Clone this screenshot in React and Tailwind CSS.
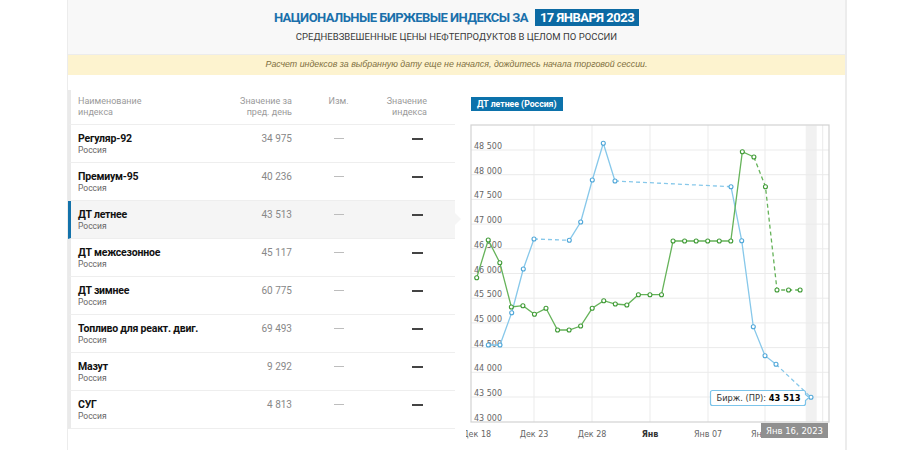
import React from "react";

const rows = [
  { name: "Регуляр-92", prev: "34 975" },
  { name: "Премиум-95", prev: "40 236" },
  { name: "ДТ летнее", prev: "43 513", active: true },
  { name: "ДТ межсезонное", prev: "45 117" },
  { name: "ДТ зимнее", prev: "60 775" },
  { name: "Топливо для реакт. двиг.", prev: "69 493" },
  { name: "Мазут", prev: "9 292" },
  { name: "СУГ", prev: "4 813" },
];

// chart helpers, page coordinates
const X0 = 476.7;
const STEP = 11.55;
const xi = (i) => X0 + i * STEP;
const yv = (v) => 421.7 - ((v - 43000) / 500) * 24.7;

const greenY = [
  277.7, 240, 262.7, 307, 305.7, 314.3, 308.3, 330, 330, 326, 308.3, 300.7, 304, 305,
  294.7, 294.7, 294.7, 241, 241, 241, 241, 241, 241, 151.7, 157, 186.7, 290, 290, 290,
];
const greenPts = greenY.map((y, i) => [xi(i), y]);

const blue = [
  [488.3, 345], [500, 345], [511.7, 312.7], [523.3, 269], [534, 239],
  [569.3, 240.3], [580.7, 222], [592.3, 180], [603.3, 143.3], [615, 181],
  [731, 186.7], [741.7, 240.7], [753.3, 326.7], [765, 355.7], [776, 364.3], [811, 397.3],
];

const pts = (arr) => arr.map(([x, y]) => `${x},${y}`).join(" ");

function Chart() {
  const grid = [43500, 44000, 44500, 45000, 45500, 46000, 46500, 47000, 47500, 48000, 48500];
  const vlines = [534, 592, 650, 708, 765, 822.7];
  const xlabels = [
    { x: 476.7, t: "Дек 18" },
    { x: 534, t: "Дек 23" },
    { x: 592, t: "Дек 28" },
    { x: 650, t: "Янв", bold: true },
    { x: 708, t: "Янв 07" },
    { x: 765, t: "Янв 12" },
  ];
  const gSolid = greenPts.slice(0, 25);
  const gDash = greenPts.slice(24);
  return (
    <svg width="379" height="328" viewBox="466 122 379 328" className="block" style={{ fontFamily: "'DejaVu Sans', Verdana, sans-serif" }}>
      <rect x="471" y="125" width="358" height="297" fill="#fff" />
      <rect x="805.7" y="125.5" width="11" height="296" fill="#f1f1f1" />
      {grid.map((v) => (
        <line key={v} x1="471" x2="829" y1={yv(v)} y2={yv(v)} stroke="#ebebeb" strokeWidth="1" />
      ))}
      {vlines.map((x) => (
        <line key={x} x1={x} x2={x} y1="125" y2="422" stroke="#ebebeb" strokeWidth="1" />
      ))}
      <rect x="471" y="125" width="358" height="297" fill="none" stroke="#d2d2d2" strokeWidth="1.2" />
      {[43000, ...grid].map((v) => (
        <text key={v} x="474" y={yv(v) - 1} fontSize="8" fill="#666">
          {String(v).slice(0, 2) + " " + String(v).slice(2)}
        </text>
      ))}
      {xlabels.map((l) => (
        <text key={l.t} x={l.x} y="437" fontSize="8" fill={l.bold ? "#333" : "#666"} fontWeight={l.bold ? "bold" : "normal"} textAnchor="middle">
          {l.t}
        </text>
      ))}

      {/* blue series */}
      <polyline points={pts(blue.slice(0, 5))} fill="none" stroke="#87c8ea" strokeWidth="1.3" />
      <polyline points={pts(blue.slice(4, 6))} fill="none" stroke="#87c8ea" strokeWidth="1.3" strokeDasharray="4 3" />
      <polyline points={pts(blue.slice(5, 10))} fill="none" stroke="#87c8ea" strokeWidth="1.3" />
      <polyline points={pts(blue.slice(9, 11))} fill="none" stroke="#87c8ea" strokeWidth="1.3" strokeDasharray="4 3" />
      <polyline points={pts(blue.slice(10, 15))} fill="none" stroke="#87c8ea" strokeWidth="1.3" />
      <polyline points={pts(blue.slice(14, 16))} fill="none" stroke="#87c8ea" strokeWidth="1.3" strokeDasharray="4 3" />

      {/* green series */}
      <polyline points={pts(gSolid)} fill="none" stroke="#66b35a" strokeWidth="1.3" />
      <polyline points={pts(gDash)} fill="none" stroke="#66b35a" strokeWidth="1.3" strokeDasharray="4 3" />

      {blue.map(([x, y], i) => (
        <circle key={"b" + i} cx={x} cy={y} r="2" fill="#fff" stroke="#4ea6d8" strokeWidth="1.1" />
      ))}
      {greenPts.map(([x, y], i) => (
        <circle key={"g" + i} cx={x} cy={y} r="2" fill="#fff" stroke="#3f9a35" strokeWidth="1.1" />
      ))}

      {/* tooltip */}
      <path d="M712.5 390.5 H803.5 Q805.5 390.5 805.5 392.5 V394.5 L809 397.5 L805.5 400.5 V403.5 Q805.5 405.5 803.5 405.5 H712.5 Q710.5 405.5 710.5 403.5 V392.5 Q710.5 390.5 712.5 390.5 Z" fill="#fff" stroke="#7cc4ea" strokeWidth="1.2" />
      <text x="716.5" y="401" fontSize="8.3" fill="#333">
        Бирж. (ПР): <tspan fontWeight="bold" fill="#000">43 513</tspan>
      </text>

      <rect x="761" y="423" width="67" height="15" fill="#909090" />
      <text x="794.5" y="434" fontSize="8.5" fill="#fff" textAnchor="middle">Янв 16, 2023</text>
    </svg>
  );
}

export default function App() {
  return (
    <div className="w-[900px] h-[450px] bg-white overflow-hidden font-['Roboto',sans-serif]">
      <div className="ml-[67px] w-[780px] h-[450px] border-l border-r-2 border-[#ececec]">
        {/* Header */}
        <div className="h-[55px] bg-[#f8f8f8] border-b border-[#ececec] flex flex-col items-center pt-[9px]">
          <div className="flex items-center gap-[7px] h-[17px]">
            <span className="text-[13px] font-bold text-[#1a70ab] tracking-[-0.55px]">
              НАЦИОНАЛЬНЫЕ БИРЖЕВЫЕ ИНДЕКСЫ ЗА
            </span>
            <span className="bg-[#0c6aa3] text-white text-[13px] font-bold px-[5px] h-[17px] leading-[17px] tracking-[-0.5px]">
              17 ЯНВАРЯ 2023
            </span>
          </div>
          <div className="mt-[5px] text-[9.5px] leading-[12px] text-[#3a3a3a]">
            СРЕДНЕВЗВЕШЕННЫЕ ЦЕНЫ НЕФТЕПРОДУКТОВ В ЦЕЛОМ ПО РОССИИ
          </div>
        </div>

        {/* Banner */}
        <div className="h-[20px] bg-[#fdf3cf] flex items-center justify-center text-[8.85px] italic text-[#80703f] font-['Liberation_Sans',sans-serif]">
          Расчет индексов за выбранную дату еще не начался, дождитесь начала торговой сессии.
        </div>

        {/* Body */}
        <div className="flex mt-[15px]">
          {/* Table */}
          <div className="w-[387px]">
            <div className="flex h-[35px] border-l-[3px] border-l-[#eaeaea] border-b border-b-[#eeeeee] pl-[7px] pt-[6px] text-[9px] leading-[11px] text-[#9a9a9a]">
              <div className="w-[147px]">Наименование<br />индекса</div>
              <div className="w-[67px] text-right">Значение за<br />пред. день</div>
              <div className="w-[92px] text-center pl-[1px]">Изм.</div>
              <div className="w-[43px] text-right">Значение<br />индекса</div>
            </div>
            {rows.map((r) => (
              <div
                key={r.name}
                className={`relative flex h-[38px] border-l-[3px] border-b border-b-[#eeeeee] pl-[7px] pt-[7px] ${
                  r.active ? "border-l-[#1372aa] bg-[#f5f5f5]" : "border-l-[#eaeaea] bg-white"
                }`}
              >
                <div className="w-[147px]">
                  <div className="text-[10.5px] leading-[13px] font-bold text-[#111] tracking-[-0.2px]">{r.name}</div>
                  <div className="text-[8.5px] leading-[11px] text-[#666]">Россия</div>
                </div>
                <div className="w-[67px] text-right text-[10px] leading-[13px] text-[#888]">{r.prev}</div>
                <div className="w-[92px] flex justify-center pt-[6px]">
                  <div className="w-[10px] h-px bg-[#bdbdbd] ml-[1px]" />
                </div>
                <div className="w-[43px] flex justify-end pt-[6px] pr-[4px]">
                  <div className="w-[11px] h-[1.5px] bg-[#444]" />
                </div>
                {r.active && (
                  <div className="absolute right-[-6px] top-[12px] w-0 h-0 border-y-[6px] border-y-transparent border-l-[6px] border-l-[#f5f5f5]" />
                )}
              </div>
            ))}
          </div>

          {/* Chart */}
          <div className="ml-[11px]">
            <div className="ml-[5px] mt-[7px] h-[14px] w-fit bg-[#0c72ab] text-white text-[8.7px] font-bold leading-[14px] px-[6px] whitespace-nowrap">
              ДТ летнее (Россия)
            </div>
            <div className="mt-[11px]">
              <Chart />
            </div>
          </div>
        </div>
      </div>
    </div>
  );
}
